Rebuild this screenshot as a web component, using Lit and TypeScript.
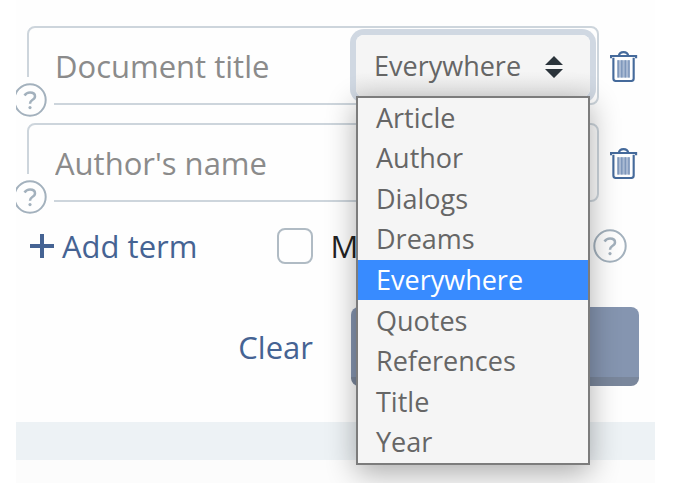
import { LitElement, html, css, svg } from "lit";
import { customElement, property, state } from "lit/decorators.js";
import { classMap } from "lit/directives/class-map.js";

const SCOPES = ["Article", "Author", "Dialogs", "Dreams", "Everywhere", "Quotes", "References", "Title", "Year"];

const trashIcon = html`<svg class="trash-icon" viewBox="0 -1 30 33" width="29" height="32" aria-hidden="true">
  ${svg`<path d="M9 5.5C9.500 2.500 11 1.200 14 1.200S18.500 2.500 19 5.500" fill="none" stroke="#456a9b" stroke-width="2.200"/>
  <path d="M1 7.500V5.200H27V7.500" fill="none" stroke="#456a9b" stroke-width="2.200"/>
  <path d="M3.500 7V28.500Q3.500 31 6 31H22Q24.500 31 24.500 28.500V7" fill="none" stroke="#456a9b" stroke-width="2.200"/>
  <rect x="7.500" y="9.500" width="13" height="18" fill="#a9bad3"/>
  <path d="M8.500 9.500V27.500M12.200 9.500V27.500M15.900 9.500V27.500M19.600 9.500V27.500" stroke="#7d96ba" stroke-width="1.500"/>`}
</svg>`;

@customElement("help-button")
class HelpButton extends LitElement {
  static styles = css`
    :host {
      display: block;
    }
    .help {
      display: block;
      padding: 0;
      border: 0;
      background: none;
      cursor: pointer;
    }
    .help svg {
      display: block;
    }
  `;

  render() {
    return html`<button class="help" type="button" aria-label="Help">
      <svg viewBox="0 0 34 34" width="34" height="34" aria-hidden="true">
        <circle cx="17" cy="17" r="15.700" fill="#fefefe" stroke="#a3b1bd" stroke-width="2" />
        <path
          d="M11.500 12.500Q13.500 9.500 17 9.500Q22 9.500 22 13.300Q22 15.500 19.300 17Q17 18.400 17 20.800"
          fill="none"
          stroke="#a3b1bd"
          stroke-width="2.500"
        />
        <circle cx="17" cy="24.600" r="1.600" fill="#a3b1bd" />
      </svg>
    </button>`;
  }
}

@customElement("scope-select")
class ScopeSelect extends LitElement {
  @property() value = "Everywhere";
  @property({ type: Boolean }) open = false;

  static styles = css`
    :host {
      display: block;
      position: relative;
      flex: none;
      width: 234px;
      font-family: "Open Sans", "Noto Sans", sans-serif;
    }
    .trigger {
      appearance: none;
      display: block;
      box-sizing: border-box;
      width: 100%;
      height: 62px;
      padding: 0 50px 0 18px;
      border: 0;
      border-radius: 8px;
      outline: 0;
      background: linear-gradient(#f5f5f5 60%, #e6e6e6);
      box-shadow: 0 0 0 6px #d0d8e2;
      color: #666;
      font: 400 27px "Open Sans", "Noto Sans", sans-serif;
    }
    .arrows {
      position: absolute;
      top: 20px;
      right: 26px;
      pointer-events: none;
    }
    .menu {
      position: absolute;
      z-index: 2;
      top: 61px;
      left: 0;
      right: 0;
      display: grid;
      grid-auto-rows: 1fr;
      height: 365px;
      border: 2px solid #7c7c7c;
      background: #f5f5f5;
      box-shadow: 0 8px 28px rgba(0, 0, 0, 0.32);
    }
    .option {
      display: block;
      width: 100%;
      padding: 0 18px;
      border: 0;
      background: none;
      color: #666;
      font: 400 27px/38px "Open Sans", "Noto Sans", sans-serif;
      text-align: left;
    }
    .selected {
      background: #388bff;
      color: #fff;
    }
  `;

  private pick(value: string) {
    this.value = value;
    this.open = false;
  }

  private toggle(event: Event) {
    event.preventDefault();
    this.open = !this.open;
  }

  render() {
    return html`
      <select class="trigger" aria-label="Search in" .value=${this.value} @mousedown=${this.toggle}>
        ${SCOPES.map((s) => html`<option ?selected=${s === this.value}>${s}</option>`)}
      </select>
      <svg class="arrows" viewBox="0 0 20 24" width="20" height="24" aria-hidden="true">
        <path d="M1 10L10 1L19 10ZM1 14H19L10 23Z" fill="#2b343b" />
      </svg>
      ${this.open
        ? html`<div class="menu" role="listbox" aria-label="Search in">
            ${SCOPES.map(
              (s) => html`<button
                type="button"
                role="option"
                aria-selected=${s === this.value}
                class=${classMap({ option: true, selected: s === this.value })}
                @click=${() => this.pick(s)}
              >${s}</button>`
            )}
          </div>`
        : ""}
    `;
  }
}

@customElement("app-root")
class AppRoot extends LitElement {
  @state() private terms = [
    { label: "Document title", open: true },
    { label: "Author's name", open: false },
  ];

  static styles = css`
    :host {
      display: block;
      overflow: hidden;
      background: #fff;
      color: #222;
      font: 400 31px/42px "Open Sans", "Noto Sans", sans-serif;
    }
    .page {
      margin: 0 23px 0 16px;
      overflow: hidden;
      background: #fefefe;
    }
    .search {
      padding: 26px 16px 36px 11px;
    }
    .terms {
      display: grid;
      grid-template-columns: minmax(0, 1fr);
      gap: 18px;
    }
    .term {
      display: flex;
      align-items: center;
      gap: 11px;
    }
    .field {
      position: relative;
      flex: 1;
      min-width: 0;
      display: flex;
      align-items: center;
      padding-right: 7px;
      border: 2px solid #cdd5dc;
      border-radius: 8px;
    }
    .input {
      flex: 1;
      min-width: 0;
      height: 75px;
      box-sizing: border-box;
      padding: 0 0 0 26px;
      border: 0;
      outline: 0;
      background: none;
      color: #333;
      font: inherit;
    }
    .input::placeholder {
      color: #8b8b8b;
      opacity: 1;
    }
    .field-help {
      position: absolute;
      left: -16px;
      bottom: -18px;
      padding: 6px 7px 4px 0;
      background: #fefefe;
    }
    .trash {
      padding: 0;
      border: 0;
      background: none;
      cursor: pointer;
    }
    .trash-icon {
      display: block;
    }
    .options {
      display: flex;
      align-items: center;
      margin-top: 23px;
      padding: 0 12px 0 2px;
    }
    .link {
      display: flex;
      align-items: center;
      gap: 7px;
      padding: 0;
      border: 0;
      background: none;
      color: #456393;
      font: inherit;
      cursor: pointer;
    }
    .match {
      flex: 1;
      display: flex;
      align-items: center;
      gap: 17px;
      margin-left: 80px;
    }
    .check {
      appearance: none;
      width: 36px;
      height: 36px;
      margin: 0;
      border: 2px solid #b0bbc4;
      border-radius: 8px;
      background: #fefefe;
    }
    .actions {
      display: grid;
      grid-template-columns: 1fr 288px;
      align-items: center;
      gap: 38px;
      margin-top: 40px;
    }
    .clear {
      justify-self: end;
    }
    .submit {
      height: 79px;
      border: 0;
      border-bottom: 9px solid #7a879c;
      border-radius: 8px;
      background: #8595b0;
    }
    .band {
      height: 38px;
      background: #edf2f5;
    }
    .below {
      height: 23px;
      background: #fcfcfc;
    }
  `;

  render() {
    return html`<main class="page">
      <form class="search">
        <div class="terms">
          ${this.terms.map(
            (t) => html`<div class="term">
              <div class="field">
                <input class="input" type="text" placeholder=${t.label} aria-label=${t.label} />
                ${t.open ? html`<scope-select open></scope-select>` : ""}
                <help-button class="field-help"></help-button>
              </div>
              <button class="trash" type="button" aria-label="Remove term">${trashIcon}</button>
            </div>`
          )}
        </div>
        <div class="options">
          <button class="link" type="button">
            <svg viewBox="0 0 26 26" width="26" height="26" aria-hidden="true">
              <path d="M13 1V25M1 13H25" stroke="#456393" stroke-width="4" />
            </svg>
            Add term
          </button>
          <label class="match"><input class="check" type="checkbox" />M</label>
          <help-button></help-button>
        </div>
        <div class="actions">
          <button class="link clear" type="button">Clear</button>
          <button class="submit" type="submit" aria-label="Search"></button>
        </div>
      </form>
      <div class="band"></div>
      <div class="below"></div>
    </main>`;
  }
}
